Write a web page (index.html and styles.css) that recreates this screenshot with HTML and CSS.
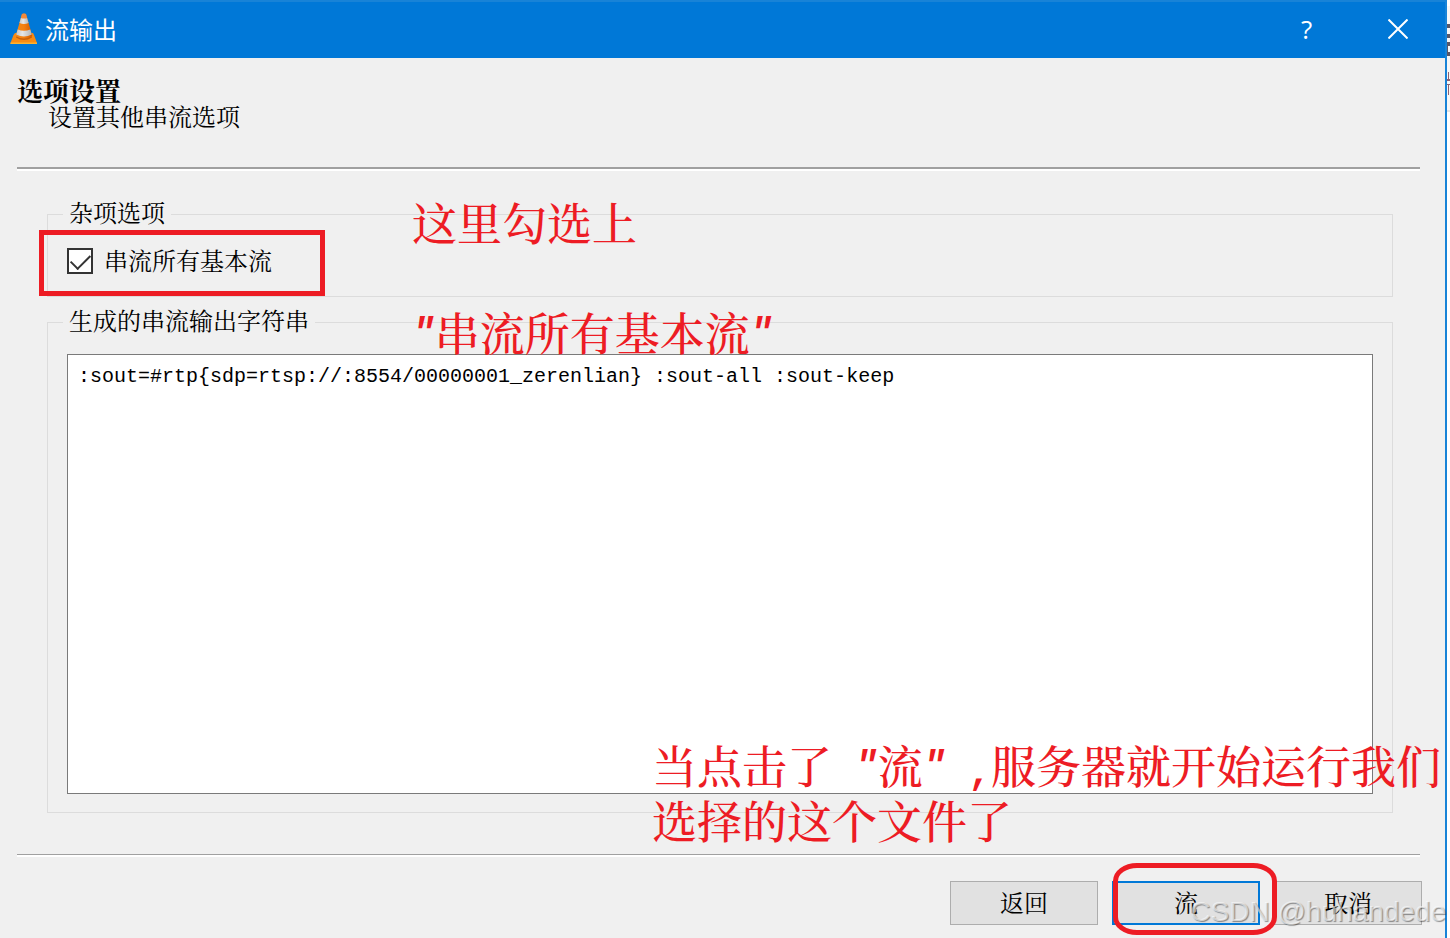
FILE: index.html
```
<!DOCTYPE html>
<html lang="zh-CN">
<head>
<meta charset="UTF-8">
<title>流输出</title>
<link rel="stylesheet" href="styles.css">
</head>
<body>
<div class="dialog">
  <div class="titlebar">
    <svg class="logo" viewBox="0 0 28 32">
      <defs>
        <linearGradient id="cone" x1="0" x2="1">
          <stop offset="0" stop-color="#f28a16"/>
          <stop offset="0.5" stop-color="#f47f10"/>
          <stop offset="1" stop-color="#cf5a00"/>
        </linearGradient>
        <linearGradient id="band" x1="0" x2="1">
          <stop offset="0" stop-color="#c4c4c4"/>
          <stop offset="0.4" stop-color="#e6e6e6"/>
          <stop offset="1" stop-color="#b4b4b4"/>
        </linearGradient>
      </defs>
      <path d="M5 20h18l1 2 3 8v1H0.500v-1l3-8z" fill="#f98b12"/>
      <path d="M0.500 29.500h26.500v1.500H0.500z" fill="#ffb32e"/>
      <path d="M6 24.500q8 5 16 0l-1-3H7z" fill="#c95f08"/>
      <path d="M12 1q2-1 4 0l6.300 22q-8.300 5-16.600 0z" fill="url(#cone)"/>
      <path d="M12 1q2-1 4 0l1.200 4.300q-3.200 1.200-6.400 0z" fill="#f08a3c"/>
      <path d="M10.900 5q3.100 1.200 6.200 0l1.500 5q-4.600 2-9.200 0z" fill="url(#band)"/>
      <path d="M7.700 16.500q6.300 2.600 12.600 0l1.500 5q-7.800 4-15.600 0z" fill="url(#band)"/>
    </svg>
    <h1 class="caption">流输出</h1>
    <button class="sys-btn" type="button" title="帮助">?</button>
    <button class="sys-btn" type="button" title="关闭">
      <svg class="cross" viewBox="0 0 20 20"><path d="M0.500 0.500l19 19M19.500 0.500l-19 19"/></svg>
    </button>
  </div>

  <div class="content">
    <div class="heading">
      <h2>选项设置</h2>
      <p>设置其他串流选项</p>
    </div>
    <hr class="line line-top">

    <fieldset class="group group-misc">
      <legend>杂项选项</legend>
      <div class="check-row">
        <input type="checkbox" id="all" checked>
        <label for="all">串流所有基本流</label>
        <span class="mark mark-box"></span>
      </div>
    </fieldset>

    <fieldset class="group group-sout">
      <legend id="sout-label">生成的串流输出字符串</legend>
      <textarea class="sout" aria-labelledby="sout-label" spellcheck="false">:sout=#rtp{sdp=rtsp://:8554/00000001_zerenlian} :sout-all :sout-keep</textarea>
    </fieldset>

    <hr class="line">
    <div class="buttons">
      <button class="btn" type="button">返回</button>
      <div class="btn-wrap">
        <button class="btn btn-default" type="button">流</button>
        <span class="mark mark-round"></span>
      </div>
      <button class="btn" type="button">取消</button>
    </div>
  </div>

  <!-- 红色标注 -->
  <p class="note note-check">这里勾选上</p>
  <p class="note note-name"><span class="half">"</span>串流所有基本流<span class="half">"</span></p>
  <p class="note note-run">当点击了<span class="half"> "</span>流<span class="half">" </span><span class="half comma">,</span>服务器就开始运行我们<br>选择的这个文件了</p>
</div>

<!-- 后面窗口露出的边 -->
<div class="behind">
  <svg viewBox="0 0 3 112">
    <path d="M0 6h3v104H0z" fill="#f7f7f7"/>
    <path d="M0 110h3v2H0z" fill="#e5e5e5"/>
    <path d="M0 24h3v4H0zM0 34h3v4H0zM0 42h3v4H0zM0 52h3v4H0zM0 46h1v6H0z" fill="#5a5766"/>
    <path d="M1 72h1v8H1zM0 79h3v2H0zM0 84h3v1H0zM1 85h1v10H1z" fill="#8f6070"/>
  </svg>
</div>
<div class="watermark">CSDN @huhandede</div>
</body>
</html>
```
FILE: styles.css
```
* {
  box-sizing: border-box;
}
body {
  display: flex;
  min-height: 100vh;
  margin: 0;
  overflow: hidden;
  background: #fff;
  color: #000;
  font-family: SimSun, "Noto Serif CJK SC", "Noto Sans CJK SC", serif;
  font-size: 24px;
  line-height: 26px;
}
h1, h2, p {
  margin: 0;
}
button, textarea {
  font: inherit;
  color: inherit;
}

.dialog {
  position: relative;
  display: flex;
  flex-direction: column;
  flex: 1;
  background: #f0f0f0;
  border-top: 2px solid #1883d7;
  border-right: 2px solid #1883d7;
}

/* 标题栏 */
.titlebar {
  display: flex;
  align-items: center;
  height: 56px;
  padding: 0 2px 2px 10px;
  background: #0078d7;
  color: #fff;
}
.logo {
  width: 28px;
  height: 32px;
  margin-right: 7px;
}
.caption {
  flex: 1;
  padding-bottom: 2px;
  font: 24px "Noto Sans CJK SC", sans-serif;
}
.sys-btn {
  width: 91px;
  height: 54px;
  padding: 0;
  border: 0;
  background: none;
  font: 26px "Open Sans", sans-serif;
}
.cross {
  display: block;
  width: 20px;
  height: 20px;
  margin: 0 auto;
  stroke: #fff;
  stroke-width: 2;
}

/* 内容 */
.content {
  display: flex;
  flex-direction: column;
  flex: 1;
  padding: 19px 23px 13px 17px;
}
.heading {
  height: 90px;
}
.heading h2 {
  font-size: 26px;
  font-weight: bold;
}
.heading p {
  padding-left: 31px;
}
.line {
  width: auto;
  height: 3px;
  margin: 0 2px 0 0;
  border: 0;
  border-top: 1px solid #a0a0a0;
  border-bottom: 2px solid #fff;
}
.line-top {
  height: 4px;
  border-top-width: 2px;
}

.group {
  min-width: 0;
  margin: 0 29px 0 30px;
  padding: 0 19px 18px;
  border: 1px solid #dcdcdc;
}
.group legend {
  margin-left: -4px;
  padding: 0 6px 4px;
  line-height: 22px;
}
.group-misc {
  height: 96px;
  margin-top: 30px;
}
.group-sout {
  display: flex;
  flex: 1;
  margin-top: 12px;
  margin-bottom: 41px;
  padding-top: 19px;
}

.check-row {
  position: relative;
  display: flex;
  align-items: center;
  gap: 11px;
  height: 26px;
  margin-top: 21px;
}
.check-row input {
  appearance: none;
  width: 26px;
  height: 26px;
  margin: 0;
  border: 2px solid #333;
  background: #fff;
}
.check-row input:checked::before {
  content: "";
  display: block;
  width: 17px;
  height: 9px;
  margin: 4px 0 0 2px;
  border-left: 2px solid #333;
  border-bottom: 2px solid #333;
  transform: rotate(-45deg);
}
.check-row label {
  padding-bottom: 2px;
}
.sout {
  display: block;
  flex: 1;
  width: 100%;
  padding: 9px 10px;
  border: 1px solid #7a7a7a;
  border-radius: 0;
  outline: 0;
  resize: none;
  background: #fff;
  font-family: "Liberation Mono", monospace;
  font-size: 20px;
}

.buttons {
  display: flex;
  justify-content: flex-end;
  gap: 14px;
  margin-top: 24px;
}
.btn-wrap {
  position: relative;
}
.btn {
  width: 148px;
  height: 44px;
  padding: 0 0 2px;
  border: 1px solid #adadad;
  background: #e1e1e1;
}
.btn-default {
  border: 2px solid #0078d7;
}

/* 标注 */
.mark {
  position: absolute;
  border: 5px solid #ed1c24;
}
.mark-box {
  left: -28px;
  top: -18px;
  width: 286px;
  height: 66px;
}
.mark-round {
  left: 1px;
  top: -18px;
  width: 164px;
  height: 72px;
  border-radius: 24px / 18px;
}
.note {
  position: absolute;
  color: #ed1c24;
  font-size: 45px;
  font-weight: 500;
  line-height: 55px;
  white-space: nowrap;
}
.note-check {
  left: 412px;
  top: 192px;
}
.note-name {
  left: 412px;
  top: 302px;
}
.note-run {
  left: 652px;
  top: 735px;
}
.half {
  font-family: "Liberation Mono", monospace;
  font-size: 38px;
  font-style: italic;
  font-weight: bold;
  line-height: 0;
  vertical-align: 7px;
  white-space: pre;
}
.comma {
  font-style: normal;
  vertical-align: baseline;
}

.behind {
  width: 3px;
}
.behind svg {
  display: block;
  width: 3px;
  height: 112px;
}
.watermark {
  position: absolute;
  right: 4px;
  bottom: 10px;
  color: rgba(255, 255, 255, 0.6);
  font: 28px/32px "Liberation Sans", sans-serif;
  text-shadow: 1px 1px 1px rgba(0, 0, 0, 0.4);
}
```
